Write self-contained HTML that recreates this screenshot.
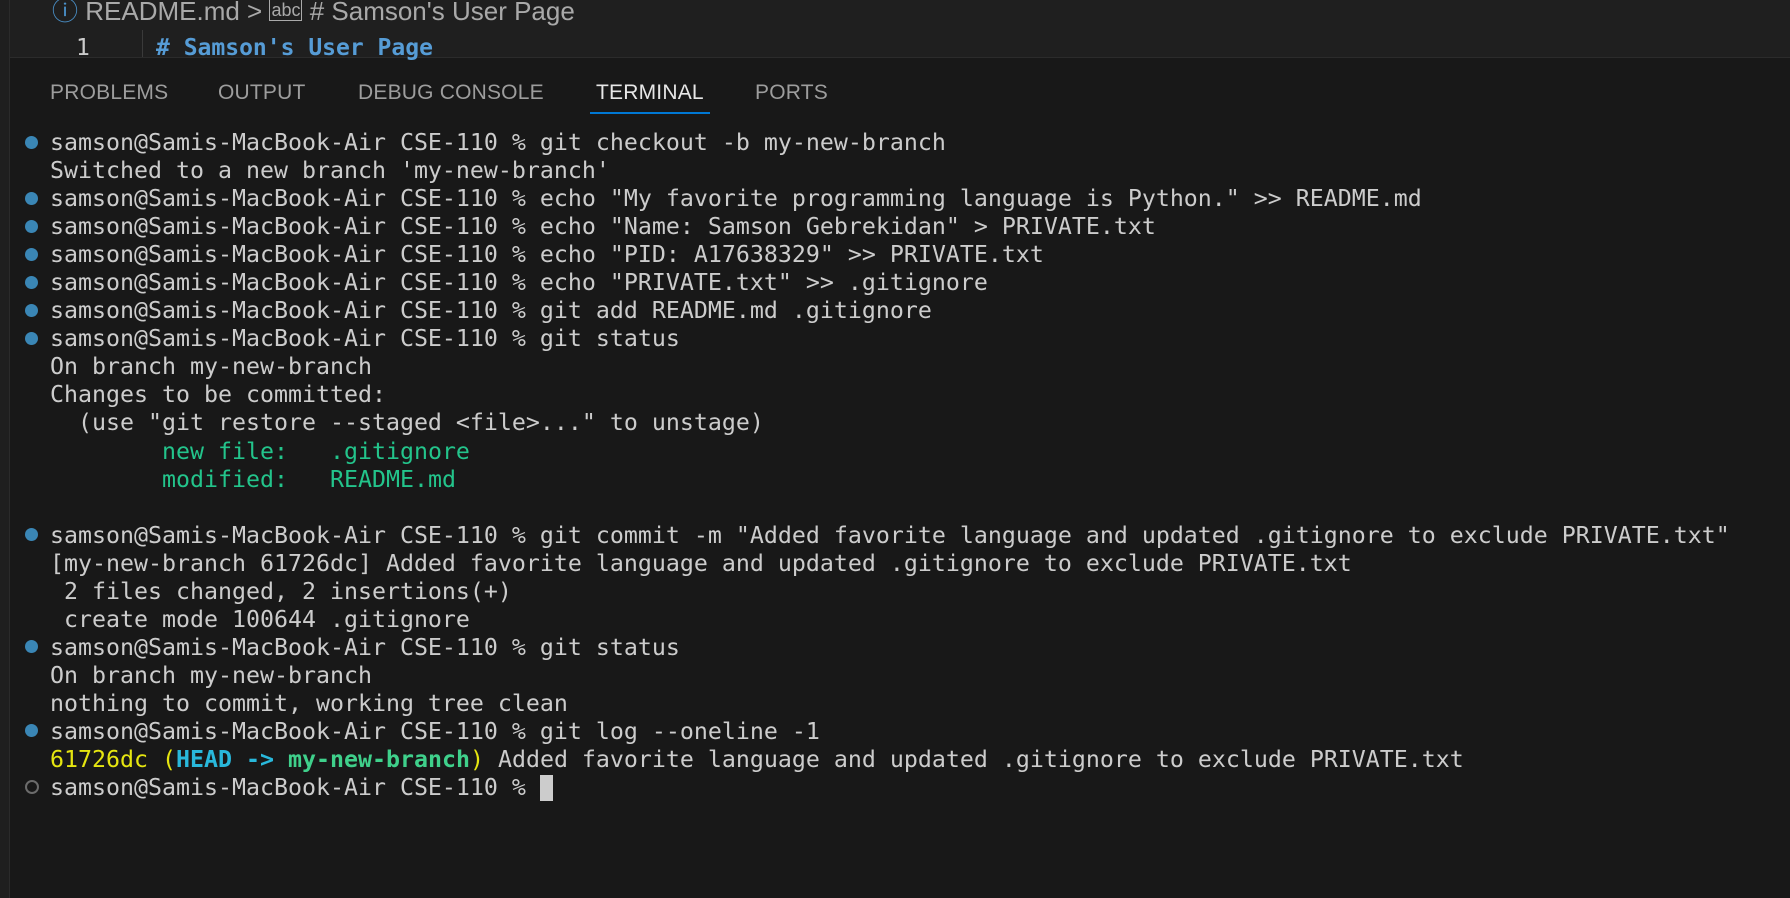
<!DOCTYPE html>
<html><head><meta charset="utf-8"><style>
body{margin:0;width:1790px;height:898px;background:#181818;overflow:hidden;position:relative;font-family:"Liberation Sans",sans-serif}
.ed{position:absolute;left:0;top:0;width:1790px;height:57px;background:#1f1f1f;border-bottom:1px solid #2b2b2b}
.strip{position:absolute;left:0;top:0;width:9px;height:898px;background:#1f1f1f;border-right:1px solid #2b2b2b}
.bc{position:absolute;left:52px;top:-9px;font-size:26px;color:#a9a9a9;white-space:nowrap}
.ln{position:absolute;left:76px;top:35px;font:23px "DejaVu Sans Mono",monospace;color:#cccccc}
.sep{position:absolute;left:142px;top:30px;width:1px;height:27px;background:#3a3a3a}
.h1{position:absolute;left:156px;top:35px;font:bold 23px "DejaVu Sans Mono",monospace;color:#569cd6;white-space:pre}
.tab{position:absolute;top:81px;font-size:21px;color:#9d9d9d;letter-spacing:0.2px}
.ul{position:absolute;left:590px;top:112px;width:120px;height:2px;background:#0078d4}
pre{position:absolute;left:50px;top:129px;margin:0;font:23.25px/28.05px "DejaVu Sans Mono",monospace;color:#cccccc}
.d{position:absolute;left:25px;width:13px;height:13px;border-radius:50%;background:#3a86b5}
.o{background:none;border:2px solid #6b6b6b;width:10px;height:10px}
.g{color:#23c48b}.y{color:#e5e510}.b{color:#29b8db;font-weight:bold}.gb{color:#3fd08b;font-weight:bold}
.cur{display:inline-block;width:13px;height:26px;background:#cccccc;vertical-align:-6px}
</style></head><body>
<div class="ed"></div>
<div class="strip"></div>
<div class="bc"><span style="color:#4a90c8">ⓘ</span> README.md &gt; <span style="font-size:18px;border:1.5px solid #aaa;padding:0 1px;vertical-align:4px">abc</span> # Samson's User Page</div>
<div class="ln">1</div><div class="sep"></div>
<div class="h1"># Samson's User Page</div>
<div class="tab" style="left:50px">PROBLEMS</div>
<div class="tab" style="left:218px">OUTPUT</div>
<div class="tab" style="left:358px">DEBUG CONSOLE</div>
<div class="tab" style="left:596px;color:#e7e7e7">TERMINAL</div>
<div class="tab" style="left:755px">PORTS</div>
<div class="ul"></div>
<div class="d" style="top:136px"></div>
<div class="d" style="top:192px"></div>
<div class="d" style="top:220px"></div>
<div class="d" style="top:248px"></div>
<div class="d" style="top:276px"></div>
<div class="d" style="top:304px"></div>
<div class="d" style="top:332px"></div>
<div class="d" style="top:528px"></div>
<div class="d" style="top:640px"></div>
<div class="d" style="top:724px"></div>
<div class="d o" style="top:780px"></div>
<pre>samson@Samis-MacBook-Air CSE-110 % git checkout -b my-new-branch
Switched to a new branch 'my-new-branch'
samson@Samis-MacBook-Air CSE-110 % echo "My favorite programming language is Python." &gt;&gt; README.md
samson@Samis-MacBook-Air CSE-110 % echo "Name: Samson Gebrekidan" &gt; PRIVATE.txt
samson@Samis-MacBook-Air CSE-110 % echo "PID: A17638329" &gt;&gt; PRIVATE.txt
samson@Samis-MacBook-Air CSE-110 % echo "PRIVATE.txt" &gt;&gt; .gitignore
samson@Samis-MacBook-Air CSE-110 % git add README.md .gitignore
samson@Samis-MacBook-Air CSE-110 % git status
On branch my-new-branch
Changes to be committed:
  (use "git restore --staged &lt;file&gt;..." to unstage)
        <span class="g">new file:   .gitignore</span>
        <span class="g">modified:   README.md</span>

samson@Samis-MacBook-Air CSE-110 % git commit -m "Added favorite language and updated .gitignore to exclude PRIVATE.txt"
[my-new-branch 61726dc] Added favorite language and updated .gitignore to exclude PRIVATE.txt
 2 files changed, 2 insertions(+)
 create mode 100644 .gitignore
samson@Samis-MacBook-Air CSE-110 % git status
On branch my-new-branch
nothing to commit, working tree clean
samson@Samis-MacBook-Air CSE-110 % git log --oneline -1
<span class="y">61726dc (</span><span class="b">HEAD -&gt; </span><span class="gb">my-new-branch</span><span class="y">)</span> Added favorite language and updated .gitignore to exclude PRIVATE.txt
samson@Samis-MacBook-Air CSE-110 % <span class="cur"></span></pre>
</body></html>
